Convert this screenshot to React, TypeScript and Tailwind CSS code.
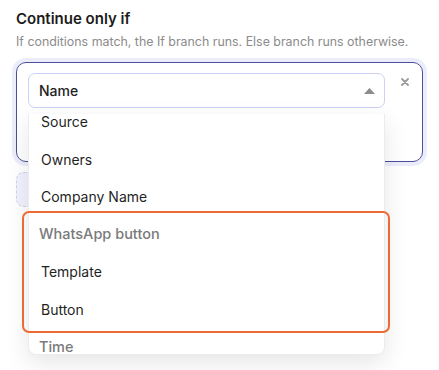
export default function App() {
  const items = [
    { label: "Source" },
    { label: "Owners" },
    { label: "Company Name" },
    { label: "WhatsApp button", group: true },
    { label: "Template" },
    { label: "Button" },
    { label: "Time", group: true },
  ];

  return (
    <div
      className="relative w-[439px] h-[370px] bg-white overflow-hidden px-4 pt-[9px]"
      style={{ fontFamily: "Inter, 'Noto Sans', sans-serif" }}
    >
      {/* heading */}
      <div className="text-[15px] leading-[20px] font-semibold text-[#1c1c1c]">Continue only if</div>
      <div className="mt-[4px] text-[12.4px] leading-[18px] text-[#8b8b8b]">
        If conditions match, the If branch runs. Else branch runs otherwise.
      </div>

      {/* condition card */}
      <div className="mt-[11px] h-[100px] rounded-[10px] border-[1.5px] border-[#4b4f9c] shadow-[0_0_0_4px_#ecedfb] flex items-start pl-[11px] pt-[10px]">
        <div className="w-[357px] h-[35px] rounded-[7px] border border-[#cdd0f2] flex items-center justify-between px-[10px]">
          <span className="text-[14px] font-medium text-[#222]">Name</span>
          <svg width="11" height="6" viewBox="0 0 11 6" className="mr-[-1px]">
            <path d="M0 6 L5.5 0 L11 6 Z" fill="#8c8c8c" />
          </svg>
        </div>
        <svg width="8" height="8" viewBox="0 0 8 8" className="ml-[16px] mt-[5px]">
          <path d="M1 1 L7 7 M7 1 L1 7" stroke="#9a9a9a" strokeWidth="1.8" strokeLinecap="round" />
        </svg>
      </div>

      {/* add condition button (behind menu) */}
      <div className="mt-[10px] w-[140px] h-[35px] rounded-[8px] border border-dashed border-[#cfd2f3] bg-[#f1f2fd]" />

      {/* dropdown menu */}
      <div className="absolute left-[28px] top-[114px] w-[357px] h-[241px] bg-white rounded-b-[8px] overflow-hidden border-x border-b border-[#ececec] shadow-[0_8px_24px_rgba(0,0,0,0.10)]">
        <div className="-mt-[11px]">
          {items.map((it) => (
            <div
              key={it.label}
              className={
                it.group
                  ? "h-[37.5px] flex items-center pl-[10px] text-[14.5px] font-medium text-[#7a7a7a]"
                  : "h-[37.5px] flex items-center pl-[12px] text-[14px] text-[#1f1f1f]"
              }
            >
              {it.label}
            </div>
          ))}
        </div>
      </div>

      {/* highlight annotation */}
      <div className="absolute left-[22px] top-[211px] w-[368px] h-[122px] rounded-[7px] border-[2.5px] border-[#ee6a35]" />
    </div>
  );
}
